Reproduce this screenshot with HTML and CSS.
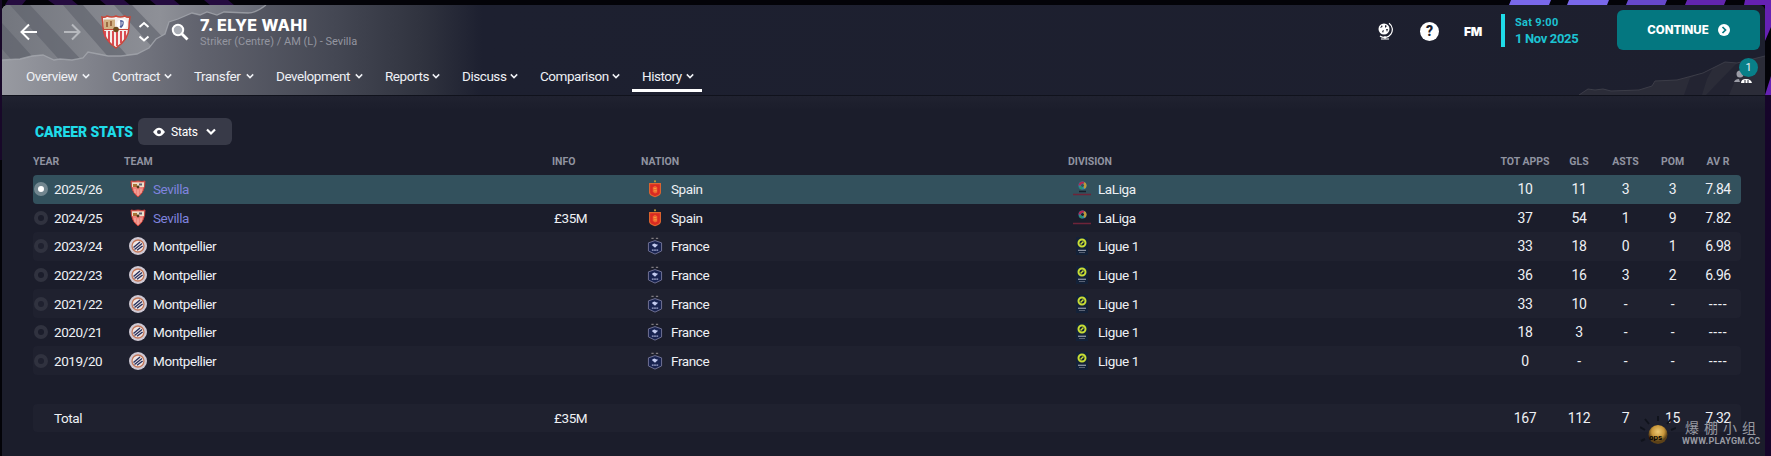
FILE: index.html
```html
<!DOCTYPE html>
<html lang="en">
<head>
  <meta charset="UTF-8">
  <title>Elye Wahi - History</title>
  <link rel="stylesheet" href="styles.css">
</head>
<body>
<!-- shared icons -->
<svg class="defs" width="0" height="0">
  <symbol id="chev" viewBox="0 0 10 10"><path d="M1 3 5 7 9 3" fill="none" stroke="currentColor" stroke-width="1.9"/></symbol>
  <symbol id="sevilla" viewBox="0 0 30 34">
    <path d="M1 2Q4 3 6 1 11 3 15 1 19 3 24 1 26 3 29 2 28 7 28 12 28 24 15 33 2 24 2 12 2 7 1 2Z" fill="#f4eeec" stroke="#c8473a" stroke-width="1.5"/>
    <path d="M3 4.500H14V14H3Z" fill="#d2b183"/>
    <path d="M5 7h2v5H5zM9 6h2v5H9z" fill="#9c6a42"/>
    <circle cx="21" cy="9" r="5" fill="#fff"/>
    <path d="M19 6q4-1 3 3t-3 2M20 5v8" fill="none" stroke="#4c5b98" stroke-width="1.2"/>
    <path d="M4 16v6M8 16v11M12 16v14M16 16v15M20 16v12M24 16v8" stroke="#d8434a" stroke-width="1.900"/>
    <path d="M2 14.500H28" stroke="#c8473a" stroke-width="1.200"/>
    <circle cx="15" cy="14.500" r="2.800" fill="#6d4a1c"/>
  </symbol>
  <symbol id="sevilla-s" viewBox="0 0 16 18">
    <path d="M1 1 4 1.500 8 1 12 1.500 15 1Q15 12 8 17 1 12 1 1Z" fill="#ef8279" stroke="#c5423b"/>
    <path d="M2 2.500H14V7H2Z" fill="#eadfc9"/>
    <path d="M3 4h4v3H3z" fill="#a97335"/>
    <path d="M9 3.500h3v2H9z" fill="#5c5f70"/>
    <circle cx="8" cy="7" r="1.400" fill="#54361a"/>
    <path d="M5 9v4M8 9.500v6M11 9v4" stroke="#f7b4ac"/>
  </symbol>
  <symbol id="montpellier" viewBox="0 0 18 18">
    <circle cx="9" cy="9" r="9" fill="#cfc9d4"/>
    <circle cx="9" cy="9" r="6" fill="#f0e6e4" stroke="#c4795c" stroke-width="1.300"/>
    <path d="M4.500 10.500 11 5M5.500 12.500 13 6.500M8 13.300 13.600 9" stroke="#27305e" stroke-width="1.400"/>
  </symbol>
  <symbol id="spain" viewBox="0 0 14 20">
    <circle cx="7" cy="1.500" r="1.200" fill="#b99b35"/>
    <path d="M1 4H13V14Q13 17 7 18.500 1 17 1 14Z" fill="#d92a22" stroke="#e0662f" stroke-width="1.200"/>
    <path d="M4.500 8 7 6.500 9.500 8V14L7 15 4.500 13Z" fill="#f0642e"/>
    <path d="M5.500 9.500h3M6 12h3" stroke="#f9a23c"/>
  </symbol>
  <symbol id="france" viewBox="0 0 16 20">
    <path d="M4 1.500h2.500M9 1.500h2.500" stroke="#807c80" stroke-width="1.300"/>
    <path d="M.7 6.500 8 4 15.300 6.500V15.500L8 19 .7 15.500Z" fill="#182350" stroke="#77789c"/>
    <path d="M4.500 9Q7 6 9 8L11.500 8.500 10 10 8 12Z" fill="#c3cbef"/>
    <path d="M4.500 14.500h7" stroke="#a2a9cf" stroke-width="1.300" stroke-dasharray="2 .5"/>
  </symbol>
  <symbol id="laliga" viewBox="0 0 18 18">
    <circle cx="9.500" cy="5.500" r="2.800" fill="none" stroke="#2c86b8" stroke-width="2.400"/>
    <path d="M6.700 5.500A2.800 2.800 0 0 1 11 3.100" fill="none" stroke="#b52750" stroke-width="2.400"/>
    <path d="M11 3.100A2.800 2.800 0 0 1 11 7.900" fill="none" stroke="#c09a35" stroke-width="2.400"/>
    <path d="M9.500 8.300A2.800 2.800 0 0 1 6.900 6.500" fill="none" stroke="#2b9267" stroke-width="2.400"/>
    <path d="M6 11.500H13" stroke="#16202c" stroke-width="1.500"/>
    <path d="M0 14.500H18" stroke="#6e2439" stroke-width="1.400"/>
  </symbol>
  <symbol id="ligue1" viewBox="0 0 12 18">
    <path d="M0 0H12V18H0Z" fill="#132138"/>
    <circle cx="6" cy="6" r="3.500" fill="none" stroke="#c9de35" stroke-width="2"/>
    <path d="M4.500 7.500 7.500 4.500" stroke="#c9de35" stroke-width="1.500"/>
    <path d="M2 13.300h8" stroke="#8d95a5" stroke-width="1.300"/>
    <path d="M3 15.500h6" stroke="#596274"/>
  </symbol>
</svg>

<div class="backdrop">
  <svg class="stripes" width="1771" height="456">
    <path d="M8 0h18l-4 5H5zM48 0h24l6 5H55zM100 0h24l6 5h-24zM150 0h24l6 5h-24zM204 0h24l6 5h-24z" fill="#250c40"/>
    <path d="M1511 0h40l-2 5h-40zM1569 0h40l-2 5h-40z" fill="#7968ea"/>
    <path d="M1628 0h39l-2 5h-39z" fill="#6648cb"/>
    <path d="M1687 0h39l-2 5h-39z" fill="#6225ae"/>
    <path d="M1745 0h26v27l-6 14V5h-21zM1771 76v19h-6z" fill="#6521b3"/>
    <path d="M1765 95h6v361h-6z" fill="#16052a"/>
    <path d="M0 0h2v160H0z" fill="#180829"/>
  </svg>
</div>

<div class="window">
  <header class="header">
    <svg class="torn" width="1763" height="90">
      <defs>
        <linearGradient id="torn-fill" x1="0" x2="1"><stop offset="0" stop-color="#73767e"/><stop offset=".6" stop-color="#8e9097"/><stop offset="1" stop-color="#676a76"/></linearGradient>
        <clipPath id="torn-clip"><path d="M0 0H264Q254 8 246 8L222 7 215 10 205 7 198 10 190 8 176 14 167 17 163 29 154 34 147 43 135 49 119 51 106 51 96 49 86 47 81 53 70 55 58 54 52 55 41 50 30 51 18 54 0 55Z"/></clipPath>
      </defs>
      <g clip-path="url(#torn-clip)">
        <path d="M0 0H264V60H0Z" fill="url(#torn-fill)"/>
        <path d="M0 18 38 60H14L0 44ZM8 0h20l56 60H62zM61 0h20l48 55h-20zM112 0h18l42 44h-20z" fill="#5d606b" opacity=".6"/>
      </g>
      <path d="M264 0Q254 8 246 8L222 7 215 10 205 7 198 10 190 8 176 14 167 17 163 29 154 34 147 43 135 49 119 51 106 51 96 49 86 47 81 53 70 55 58 54 52 55 41 50 30 51 18 54 0 55" fill="none" stroke="#a7a9b0" stroke-opacity=".75" stroke-width="1.300"/>
      <path d="M1577 90 1586 84 1593 85 1601 84 1609 86 1637 85 1650 81 1653 76 1675 75 1690 71 1701 68 1711 63 1723 57 1735 58 1763 51V90Z" fill="#2b2c38"/>
      <path d="M1688 73 1711 63 1705 74 1700 90H1682ZM1735 58 1748 54 1733 76 1727 90H1704Z" fill="#1f2130" opacity=".65"/>
      <path d="M1577 90 1586 84 1593 85 1601 84 1609 86 1637 85 1650 81 1653 76 1675 75 1690 71 1701 68 1711 63 1723 57 1735 58 1763 51" fill="none" stroke="#3c3d48"/>
    </svg>

    <div class="topbar">
      <svg class="arrow" width="18" height="18" viewBox="0 0 18 18"><path d="M17 9H2M9 1.500 1.500 9 9 16.500" fill="none" stroke="#fff" stroke-width="2"/></svg>
      <svg class="arrow fwd" width="18" height="18" viewBox="0 0 18 18"><path d="M1 9H16M9 1.500 16.500 9 9 16.500" fill="none" stroke="#b6b8bd" stroke-width="2"/></svg>
      <svg class="club" width="30" height="34"><use href="#sevilla"/></svg>
      <svg class="updown" width="12" height="22" viewBox="0 0 12 22"><path d="M1.500 6 6 2 10.500 6M1.500 15.500 6 19.500 10.500 15.500" fill="none" stroke="#fff" stroke-width="2"/></svg>
      <svg class="search" width="18" height="18" viewBox="0 0 18 18"><circle cx="7" cy="7" r="5.200" fill="#aaaeb6" stroke="#fff" stroke-width="2"/><path d="M11 11 16.500 16.500" stroke="#fff" stroke-width="2.800"/></svg>
      <div class="player">
        <h1>7. ELYE WAHI</h1>
        <p>Striker (Centre) / AM (L) - Sevilla</p>
      </div>
      <div class="tools">
        <svg class="globe" width="16" height="18" viewBox="0 0 16 18">
          <circle cx="7" cy="7" r="5.500" fill="#fff"/>
          <path d="M12 1.200A7.600 7.600 0 0 1 3 14M8 14v3M4 17h8" fill="none" stroke="#fff" stroke-width="1.200"/>
          <path d="M3 6 5 3 5.500 5ZM8 3l2 1-2 2zM5 9l2-1-1 3zM9 7l2 0-1 3z" fill="#1c1f2e"/>
        </svg>
        <span class="help">?</span>
        <span class="fm">FM</span>
        <div class="date"><span>Sat 9:00</span><b>1 Nov 2025</b></div>
        <button class="continue"><span>CONTINUE</span>
          <svg width="12" height="12" viewBox="0 0 12 12"><circle cx="6" cy="6" r="6" fill="#fff"/><path d="M4.500 3 7.500 6 4.500 9" fill="none" stroke="#047780" stroke-width="1.700"/></svg>
        </button>
      </div>
    </div>

    <nav class="nav">
      <a class="tab"><span>Overview</span><svg><use href="#chev"/></svg></a>
      <a class="tab"><span>Contract</span><svg><use href="#chev"/></svg></a>
      <a class="tab"><span>Transfer</span><svg><use href="#chev"/></svg></a>
      <a class="tab"><span>Development</span><svg><use href="#chev"/></svg></a>
      <a class="tab"><span>Reports</span><svg><use href="#chev"/></svg></a>
      <a class="tab"><span>Discuss</span><svg><use href="#chev"/></svg></a>
      <a class="tab"><span>Comparison</span><svg><use href="#chev"/></svg></a>
      <a class="tab active"><span>History</span><svg><use href="#chev"/></svg></a>
      <div class="staff">
        <svg width="18" height="16" viewBox="0 0 18 16"><circle cx="6" cy="5" r="3.500" fill="#9b9ca6"/><path d="M0 13Q1 10 5 10L6 13Z" fill="#9b9ca6"/><path d="M7 14Q7 10 12 10 17 10 18 14Z" fill="#fff"/><path d="M11 11v4M14 11v4" stroke="#2b2c38"/></svg>
        <span class="badge">1</span>
      </div>
    </nav>
  </header>

  <main class="content">
    <div class="title">
      <h2>CAREER STATS</h2>
      <button class="view">
        <svg class="eye" width="12" height="10" viewBox="0 0 12 10"><path d="M0 5Q6-3.500 12 5 6 13.500 0 5Z" fill="#fff"/><circle cx="6" cy="5" r="2" fill="#3a3c4b"/></svg>
        <span>Stats</span>
        <svg class="down" width="12" height="10" viewBox="0 0 12 10"><path d="M2 2.500 6 6.500 10 2.500" fill="none" stroke="#fff" stroke-width="2.200"/></svg>
      </button>
    </div>

    <div class="row head">
      <span>YEAR</span><span>TEAM</span><span class="inf">INFO</span><span>NATION</span><span>DIVISION</span>
      <span class="n">TOT APPS</span><span class="n">GLS</span><span class="n">ASTS</span><span class="n">POM</span><span class="n">AV R</span>
    </div>
    <div class="row current">
      <span class="year"><i></i>2025/26</span>
      <span class="team own"><svg class="ic"><use href="#sevilla-s"/></svg>Sevilla</span>
      <span class="info"></span>
      <span class="nation"><svg class="ic"><use href="#spain"/></svg>Spain</span>
      <span class="division"><svg class="ic"><use href="#laliga"/></svg>LaLiga</span>
      <span class="n">10</span><span class="n">11</span><span class="n">3</span><span class="n">3</span><span class="n">7.84</span>
    </div>
    <div class="row">
      <span class="year"><i></i>2024/25</span>
      <span class="team own"><svg class="ic"><use href="#sevilla-s"/></svg>Sevilla</span>
      <span class="info">£35M</span>
      <span class="nation"><svg class="ic"><use href="#spain"/></svg>Spain</span>
      <span class="division"><svg class="ic"><use href="#laliga"/></svg>LaLiga</span>
      <span class="n">37</span><span class="n">54</span><span class="n">1</span><span class="n">9</span><span class="n">7.82</span>
    </div>
    <div class="row odd">
      <span class="year"><i></i>2023/24</span>
      <span class="team"><svg class="ic"><use href="#montpellier"/></svg>Montpellier</span>
      <span class="info"></span>
      <span class="nation"><svg class="ic"><use href="#france"/></svg>France</span>
      <span class="division"><svg class="ic"><use href="#ligue1"/></svg>Ligue 1</span>
      <span class="n">33</span><span class="n">18</span><span class="n">0</span><span class="n">1</span><span class="n">6.98</span>
    </div>
    <div class="row">
      <span class="year"><i></i>2022/23</span>
      <span class="team"><svg class="ic"><use href="#montpellier"/></svg>Montpellier</span>
      <span class="info"></span>
      <span class="nation"><svg class="ic"><use href="#france"/></svg>France</span>
      <span class="division"><svg class="ic"><use href="#ligue1"/></svg>Ligue 1</span>
      <span class="n">36</span><span class="n">16</span><span class="n">3</span><span class="n">2</span><span class="n">6.96</span>
    </div>
    <div class="row odd">
      <span class="year"><i></i>2021/22</span>
      <span class="team"><svg class="ic"><use href="#montpellier"/></svg>Montpellier</span>
      <span class="info"></span>
      <span class="nation"><svg class="ic"><use href="#france"/></svg>France</span>
      <span class="division"><svg class="ic"><use href="#ligue1"/></svg>Ligue 1</span>
      <span class="n">33</span><span class="n">10</span><span class="n">-</span><span class="n">-</span><span class="n none">----</span>
    </div>
    <div class="row">
      <span class="year"><i></i>2020/21</span>
      <span class="team"><svg class="ic"><use href="#montpellier"/></svg>Montpellier</span>
      <span class="info"></span>
      <span class="nation"><svg class="ic"><use href="#france"/></svg>France</span>
      <span class="division"><svg class="ic"><use href="#ligue1"/></svg>Ligue 1</span>
      <span class="n">18</span><span class="n">3</span><span class="n">-</span><span class="n">-</span><span class="n none">----</span>
    </div>
    <div class="row odd">
      <span class="year"><i></i>2019/20</span>
      <span class="team"><svg class="ic"><use href="#montpellier"/></svg>Montpellier</span>
      <span class="info"></span>
      <span class="nation"><svg class="ic"><use href="#france"/></svg>France</span>
      <span class="division"><svg class="ic"><use href="#ligue1"/></svg>Ligue 1</span>
      <span class="n">0</span><span class="n">-</span><span class="n">-</span><span class="n">-</span><span class="n none">----</span>
    </div>
    <div class="row odd total">
      <span class="year">Total</span>
      <span></span>
      <span class="info">£35M</span>
      <span></span>
      <span></span>
      <span class="n">167</span><span class="n">112</span><span class="n">7</span><span class="n">15</span><span class="n">7.32</span>
    </div>
  </main>
</div>

<div class="mark">
  <svg width="36" height="36" viewBox="0 0 36 36">
    <defs><radialGradient id="ball" cx=".5" cy=".35"><stop offset="0" stop-color="#ecc873"/><stop offset=".65" stop-color="#c8963a"/><stop offset="1" stop-color="#5d4218"/></radialGradient></defs>
    <path d="M18 6V1M9 9 5 4M27 9l4-5M5 15 0 12M31 15l5-2M5 24 1 26" stroke="#10131c" stroke-width="2"/>
    <circle cx="18" cy="19.500" r="9.500" fill="url(#ball)"/>
    <text x="9" y="25" class="ops">ops</text>
  </svg>
  <div class="site"><span class="cn">爆棚小组</span><span class="url">WWW.PLAYGM.CC</span></div>
</div>
</body>
</html>
```
FILE: styles.css
```css
*{
  margin: 0;
  padding: 0;
  box-sizing: border-box;
}
body{
  width: 1771px;
  height: 456px;
  overflow: hidden;
  background: #030308;
  font-family: Roboto, "Liberation Sans", sans-serif;
  font-size: 14px;
  color: #eef0f4;
}
.defs{
  position: absolute;
}
button{
  border: 0;
  font-family: inherit;
  color: #fff;
}
.backdrop{
  position: absolute;
  top: 0;
  left: 0;
}
.window{
  position: relative;
  width: 1763px;
  height: 451px;
  margin: 5px 0 0 2px;
  border-radius: 6px 6px 0 0;
  overflow: hidden;
  background: #1b1d2b;
}
.header{
  position: relative;
  height: 90px;
  background: linear-gradient(90deg, #989aa1 0, #80828b 90px, #60626d 200px, #454854 330px, #30333f 420px, #1d2030 480px, #1d1f2e 100%);
}
.torn{
  position: absolute;
  top: 0;
  left: 0;
}
/* top bar */
.topbar{
  position: relative;
  display: flex;
  align-items: center;
  height: 54px;
  padding-left: 18px;
}
.fwd{
  margin-left: 25px;
}
.club{
  margin-left: 20px;
}
.updown{
  margin-left: 7px;
}
.search{
  margin-left: 21px;
}
.player{
  margin-left: 11px;
}
.player h1{
  height: 21px;
  line-height: 20px;
  font-family: Inter, sans-serif;
  font-size: 16px;
  font-weight: 800;
  letter-spacing: 0.4px;
  color: #fff;
}
.player p{
  height: 14px;
  line-height: 12px;
  font-size: 11px;
  color: #9496a0;
}
.tools{
  display: flex;
  align-items: center;
  height: 50px;
  margin: -4px 0 0 auto;
  padding-right: 5px;
}
.help{
  width: 19px;
  height: 19px;
  margin-left: 27px;
  border-radius: 50%;
  background: #fff;
  color: #1c1f2e;
  font-size: 14px;
  font-weight: 900;
  line-height: 19px;
  text-align: center;
}
.help, .fm, .globe{
  margin-top: 2px;
}
.fm{
  width: 20px;
  margin-left: 25px;
  font-family: Inter, sans-serif;
  font-size: 12px;
  font-weight: 900;
  letter-spacing: -0.3px;
  color: #fff;
}
.date{
  display: flex;
  flex-direction: column;
  width: 116px;
  height: 33px;
  margin-left: 17px;
  padding-left: 10px;
  border-left: 4px solid #1fdbe8;
  color: #1cc3d2;
  line-height: 17px;
  font-size: 11px;
  font-weight: 700;
  letter-spacing: 0.3px;
}
.date b{
  line-height: 15px;
  font-size: 13px;
  font-weight: 700;
  letter-spacing: -0.35px;
}
.continue{
  display: flex;
  align-items: center;
  justify-content: center;
  gap: 9px;
  width: 143px;
  height: 40px;
  border-radius: 6px;
  background: #047780;
  font-family: Inter, sans-serif;
  font-size: 11.5px;
  font-weight: 800;
}
/* tabs */
.nav{
  position: relative;
  display: grid;
  grid-template-columns: 82px 78px 78px 105px 73px 74px 98px 70px 1fr;
  column-gap: 4px;
  height: 36px;
  padding-left: 14px;
}
.tab{
  display: flex;
  align-items: center;
  justify-content: space-between;
  height: 33px;
  padding: 4px 8px 0 10px;
  border-bottom: 3px solid transparent;
  font-size: 13.5px;
  letter-spacing: -0.45px;
}
.tab svg{
  flex: none;
  width: 8px;
  height: 8px;
}
.tab span{
  white-space: nowrap;
}
.tab.active{
  border-bottom-color: #fff;
}
.staff{
  position: relative;
  justify-self: end;
  margin: 10px 13px 0 0;
}
.badge{
  position: absolute;
  top: -11px;
  left: 5px;
  width: 19px;
  height: 19px;
  border-radius: 50%;
  background: #087f88;
  font-size: 11px;
  line-height: 19px;
  text-align: center;
}
/* content */
.content{
  height: 361px;
  padding: 22px 24px 0 31px;
  border-top: 1px solid #10121c;
  background: linear-gradient(#202230, #1b1d2b 14px);
}
.title{
  display: flex;
  align-items: center;
  height: 27px;
}
.title h2{
  width: 105px;
  padding-left: 2px;
  font-size: 14px;
  font-weight: 900;
  letter-spacing: -0.1px;
  white-space: nowrap;
  color: #1fdbe8;
}
.view{
  display: flex;
  align-items: center;
  width: 94px;
  height: 27px;
  padding-left: 15px;
  border-radius: 6px;
  background: #383a48;
  font-size: 12px;
  letter-spacing: -0.2px;
}
.view span{
  width: 34px;
  margin-left: 6px;
  text-align: left;
}
.row{
  display: grid;
  grid-template-columns: 91px 427px 90px 427px 430px 54px 54px 39px 55px 36px;
  align-items: center;
  width: 1708px;
  height: 28.57px;
  border-radius: 4px;
  font-size: 13.5px;
  letter-spacing: -0.4px;
}
.row > span{
  display: flex;
  align-items: center;
  white-space: nowrap;
}
.row > .n{
  justify-content: center;
  font-size: 14px;
  letter-spacing: -0.4px;
}
.row > .none{
  letter-spacing: 0.8px;
}
.head, .head.row > .n{
  font-size: 10.5px;
  letter-spacing: 0;
}
.head{
  height: 30px;
  padding-top: 3px;
  font-weight: 700;
  color: #9093a0;
}
.inf{
  padding-left: 1px;
}
.odd{
  background: #1f212f;
}
.current{
  background: #33515d;
}
.total{
  margin-top: 28.57px;
}
.year i{
  width: 14px;
  height: 14px;
  margin: 0 6px 0 1px;
  border: 4px solid #30323f;
  border-radius: 50%;
}
.current .year i{
  border-color: #72868f;
  background: #fff;
}
.total .year{
  padding-left: 21px;
}
.ic{
  width: 20px;
  height: 18px;
  margin: 0 5px 0 4px;
}
.nation .ic, .division .ic{
  margin-right: 6px;
}
.own{
  color: #7f83dd;
}
.info{
  padding-left: 3px;
}
/* watermark */
.mark{
  position: absolute;
  left: 1640px;
  top: 415px;
  display: flex;
}
.ops{
  font-size: 8px;
  font-weight: 700;
}
.site{
  display: flex;
  flex-direction: column;
  margin-left: 6px;
  color: #989aa2;
}
.cn{
  height: 20px;
  padding-left: 3px;
  font-family: "Noto Sans CJK SC", sans-serif;
  font-size: 14px;
  line-height: 24px;
  letter-spacing: 5px;
}
.url{
  font-size: 9px;
  font-weight: 700;
  line-height: 12px;
  letter-spacing: 0.2px;
}
```
